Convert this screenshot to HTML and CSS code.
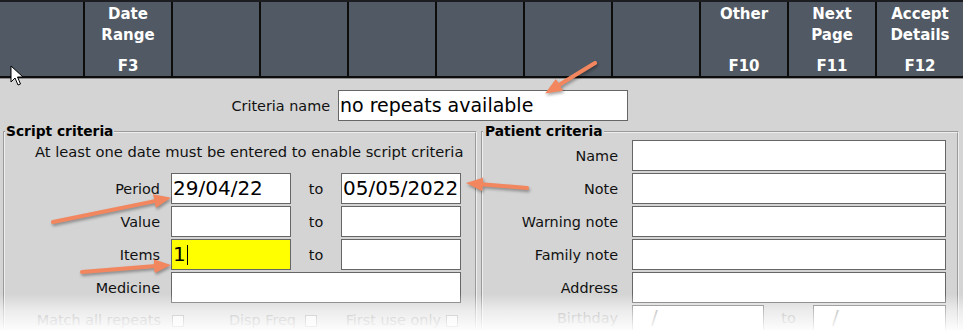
FILE: index.html
```html
<!DOCTYPE html>
<html>
<head>
<meta charset="utf-8">
<link rel="stylesheet" href="styles.css">
</head>
<body>
<div class="page">
  <div class="toolbar">
    <div class="tb-cell first"></div>
    <div class="tb-cell"><div class="tb-label">Date<br>Range</div><div class="tb-key">F3</div></div>
    <div class="tb-cell"></div>
    <div class="tb-cell"></div>
    <div class="tb-cell"></div>
    <div class="tb-cell"></div>
    <div class="tb-cell"></div>
    <div class="tb-cell"></div>
    <div class="tb-cell"><div class="tb-label">Other</div><div class="tb-key">F10</div></div>
    <div class="tb-cell"><div class="tb-label">Next<br>Page</div><div class="tb-key">F11</div></div>
    <div class="tb-cell"><div class="tb-label">Accept<br>Details</div><div class="tb-key">F12</div></div>
  </div>

  <div class="form">
    <div class="name-row">
      <span class="lbl">Criteria name</span>
      <div class="field big">no repeats available</div>
    </div>

    <div class="panels">
      <fieldset class="panel script">
        <legend>Script criteria</legend>
        <div class="script-grid">
          <div class="info">At least one date must be entered to enable script criteria</div>

          <span class="lbl">Period</span>
          <div class="field big">29/04/22</div>
          <span class="to">to</span>
          <div class="field big">05/05/2022</div>

          <span class="lbl">Value</span>
          <div class="field"></div>
          <span class="to">to</span>
          <div class="field"></div>

          <span class="lbl">Items</span>
          <div class="field big active">1<span class="caret"></span></div>
          <span class="to">to</span>
          <div class="field"></div>

          <span class="lbl">Medicine</span>
          <div class="field span3"></div>

          <div class="checks">
            <div class="chk g1"><span>Match all repeats</span><i class="box"></i></div>
            <div class="chk g2"><span>Disp Freq</span><i class="box"></i></div>
            <div class="chk g3"><span>First use only</span><i class="box"></i></div>
          </div>
        </div>
      </fieldset>

      <fieldset class="panel patient">
        <legend>Patient criteria</legend>
        <div class="patient-grid">
          <span class="lbl">Name</span><div class="field span3"></div>
          <span class="lbl">Note</span><div class="field span3"></div>
          <span class="lbl">Warning note</span><div class="field span3"></div>
          <span class="lbl">Family note</span><div class="field span3"></div>
          <span class="lbl">Address</span><div class="field span3"></div>
          <span class="lbl dim top">Birthday</span>
          <div class="field dimfield">/</div>
          <span class="to dim top">to</span>
          <div class="field dimfield">/</div>
        </div>
      </fieldset>
    </div>
  </div>

  <div class="fade"></div>

  <svg class="annot" width="963" height="330" viewBox="0 0 963 330">
    <defs>
      <marker id="ah" markerUnits="userSpaceOnUse" markerWidth="18" markerHeight="16" refX="8" refY="7" orient="auto">
        <path d="M0,0 L17,7 L0,14 Z" fill="#f2875f"/>
      </marker>
    </defs>
    <g class="arrows">
      <line x1="595" y1="63" x2="552.8" y2="88.8" marker-end="url(#ah)"/>
      <line x1="53" y1="222" x2="162.2" y2="199.6" marker-end="url(#ah)"/>
      <line x1="527" y1="188" x2="475" y2="183.7" marker-end="url(#ah)"/>
      <line x1="82" y1="272" x2="162" y2="265.6" marker-end="url(#ah)"/>
    </g>
  </svg>

  <svg class="cursor" width="14" height="22" viewBox="0 0 14 22">
    <path d="M1,1 L1,17 L5,13 L8,20 L10.5,19 L7.5,12 L13,12 Z" fill="#fff" stroke="#000" stroke-width="1" stroke-linejoin="miter"/>
  </svg>
</div>
</body>
</html>
```

FILE: styles.css
```css
* { box-sizing: border-box; }

html, body {
  margin: 0;
  padding: 0;
  width: 963px;
  height: 330px;
  overflow: hidden;
  background: #d4d4d4;
  font-family: "DejaVu Sans", Verdana, sans-serif;
  color: #111;
}

.page {
  position: relative;
  width: 963px;
  height: 330px;
  overflow: hidden;
}

/* toolbar */
.toolbar {
  display: flex;
  height: 78px;
  background: #515a64;
  border-top: 2px solid #1b1d20;
  border-bottom: 2px solid #0c0c0c;
  box-shadow: 0 1px 0 #8d8d8d;
}

.tb-cell {
  width: 88px;
  border-left: 2px solid #0c0c0c;
  display: flex;
  flex-direction: column;
  align-items: center;
  color: #fff;
  font-weight: bold;
  font-size: 15px;
  text-align: center;
}

.tb-cell.first {
  width: 83px;
  border-left: none;
}

.tb-label {
  padding-top: 2px;
  line-height: 21px;
}

.tb-key {
  margin-top: auto;
  line-height: 20px;
}

/* form */
.form {
  padding-top: 12px;
}

.lbl {
  font-size: 14.4px;
  text-align: right;
  align-self: center;
  white-space: nowrap;
}

.lbl.top, .to.top {
  align-self: start;
  padding-top: 5px;
}

.field {
  height: 31px;
  background: #fff;
  border: 1px solid #666;
  font-size: 19px;
  line-height: 29px;
  padding-left: 1px;
  white-space: nowrap;
  color: #000;
}

.field.big { font-size: 20px; }

.name-row {
  display: grid;
  grid-template-columns: 330px 290px;
  column-gap: 8px;
}

.name-row .field { font-size: 19px; }

.panels {
  display: grid;
  grid-template-columns: 474px 478px;
  column-gap: 4px;
  margin-left: 3px;
  margin-top: 3px;
}

.panel {
  margin: 0;
  padding: 1px 0 0 0;
  border: 2px groove #eeeeee;
  min-width: 0;
  height: 240px;
}

.panel legend {
  padding: 0 1px;
  font-size: 13.8px;
  font-weight: bold;
  line-height: 15px;
  color: #000;
}

.patient legend { padding: 0 2px; }

.script-grid {
  display: grid;
  grid-template-columns: 166px 120px 50px 120px;
  grid-auto-rows: 31px;
  row-gap: 2px;
}

.script-grid .lbl { padding-right: 11px; }

.info {
  grid-column: 1 / -1;
  font-size: 14.7px;
  line-height: 17px;
  padding-left: 30px;
  padding-top: 3px;
  white-space: nowrap;
  color: #111;
}

.to {
  font-size: 14.4px;
  text-align: center;
  align-self: center;
}

.span3 { grid-column: 2 / 5; }

.active {
  background: #ffff00;
  display: flex;
  align-items: center;
}

.caret {
  display: inline-block;
  width: 1px;
  height: 20px;
  background: #000;
  margin-left: 1px;
}

.checks {
  grid-column: 1 / -1;
  display: flex;
  align-items: flex-start;
  padding-top: 7px;
  color: #8a8a8a;
  font-size: 14.4px;
  line-height: 17px;
}

.chk {
  display: flex;
  justify-content: flex-end;
  align-items: center;
  gap: 9px;
}

.chk.g1 { width: 179px; gap: 11px; }
.chk.g2 { width: 133px; }
.chk.g3 { width: 141px; gap: 5px; }

.box {
  display: inline-block;
  width: 12px;
  height: 12px;
  border: 1px solid #8a8a8a;
  background: #f2f2f2;
}

.patient-grid {
  display: grid;
  grid-template-columns: 149px 132px 49px 133px;
  grid-auto-rows: 31px;
  row-gap: 2px;
}

.patient-grid .lbl { padding-right: 14px; }

.dim { color: #8a8a8a; }

.dimfield {
  color: #8a8a8a;
  padding-left: 18px;
  font-size: 20px;
  line-height: 22px;
}

/* screenshot fade at the bottom */
.fade {
  position: absolute;
  left: 0;
  right: 0;
  top: 294px;
  height: 36px;
  background: linear-gradient(to bottom, rgba(255,255,255,0) 0%, rgba(255,255,255,0.55) 45%, rgba(255,255,255,0.95) 100%);
  pointer-events: none;
}

/* annotations */
.annot {
  position: absolute;
  left: 0;
  top: 0;
  pointer-events: none;
  filter: drop-shadow(1px 2px 1.5px rgba(0,0,0,0.35));
}

.arrows line {
  stroke: #f2875f;
  stroke-width: 4;
  stroke-linecap: round;
}

.cursor {
  position: absolute;
  left: 10px;
  top: 65px;
}
```
